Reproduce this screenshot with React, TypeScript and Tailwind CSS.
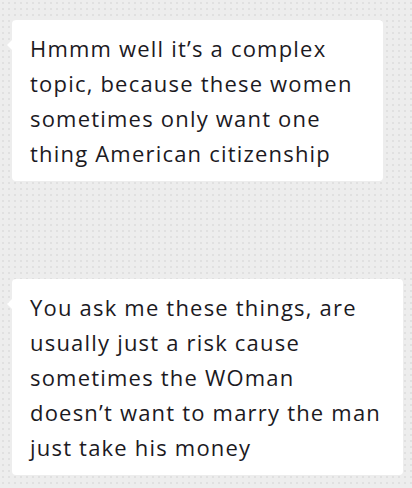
import React from "react";

const messages = [
  {
    id: 1,
    width: "w-[371px]",
    lines: [
      "Hmmm well it\u2019s a complex",
      "topic, because these women",
      "sometimes only want one",
      "thing American citizenship",
    ],
  },
  {
    id: 2,
    width: "w-[391px]",
    lines: [
      "You ask me these things, are",
      "usually just a risk cause",
      "sometimes the WOman",
      "doesn\u2019t want to marry the man",
      "just take his money",
    ],
  },
];

function Bubble({ width, lines }: { width: string; lines: string[] }) {
  return (
    <div className={`relative ${width} bg-white rounded-[4px] pl-[18px] pr-3 pt-[11px] pb-[10px]`}>
      <span className="absolute left-[-5px] top-[20px] w-0 h-0 border-y-[5px] border-y-transparent border-r-[5px] border-r-white" />
      {lines.map((l, i) => (
        <div key={i} className="text-[22px] leading-[35px] tracking-[1.2px] text-[#1c1a1f] whitespace-nowrap">
          {l}
        </div>
      ))}
    </div>
  );
}

export default function App() {
  return (
    <div
      className="w-[412px] h-[488px] overflow-hidden bg-[#ededed] bg-[radial-gradient(circle,#e0e0e0_1px,transparent_1.2px)] bg-[length:6px_6px] flex flex-col gap-[98px] pt-5 px-3"
      style={{ fontFamily: "'Open Sans', sans-serif" }}
    >
      {messages.map((m) => (
        <Bubble key={m.id} width={m.width} lines={m.lines} />
      ))}
    </div>
  );
}
